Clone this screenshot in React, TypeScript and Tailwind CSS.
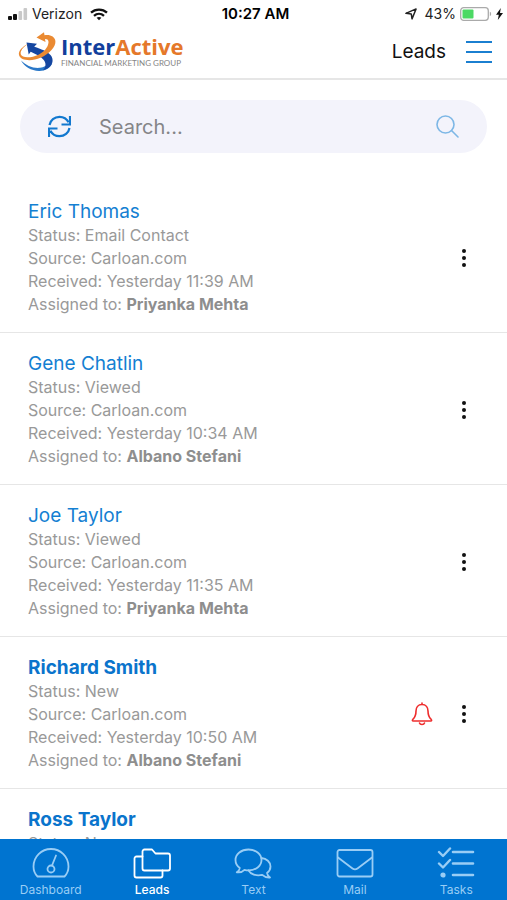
import { useState } from "react";

interface Lead {
  name: string;
  status: string;
  source: string;
  received: string;
  assignedTo: string;
  unread?: boolean;
  alert?: boolean;
}

const leads: Lead[] = [
  { name: "Eric Thomas", status: "Email Contact", source: "Carloan.com", received: "Yesterday 11:39 AM", assignedTo: "Priyanka Mehta" },
  { name: "Gene Chatlin", status: "Viewed", source: "Carloan.com", received: "Yesterday 10:34 AM", assignedTo: "Albano Stefani" },
  { name: "Joe Taylor", status: "Viewed", source: "Carloan.com", received: "Yesterday 11:35 AM", assignedTo: "Priyanka Mehta" },
  { name: "Richard Smith", status: "New", source: "Carloan.com", received: "Yesterday 10:50 AM", assignedTo: "Albano Stefani", unread: true, alert: true },
  { name: "Ross Taylor", status: "New", source: "Carloan.com", received: "Yesterday 10:42 AM", assignedTo: "Priyanka Mehta", unread: true },
];

function StatusBar() {
  return (
    <div className="grid grid-cols-3 items-center h-7 pl-2 pr-1 text-sm text-[#222]">
      <div className="flex items-center gap-1">
        <svg width="20" height="12" viewBox="0 0 20 12">
          <rect x="0" y="8" width="4" height="4" rx="1" fill="#111" />
          <rect x="5" y="6" width="4" height="6" rx="1" fill="#111" />
          <rect x="10.5" y="3" width="3.6" height="9" rx="1" fill="#c9c9c9" />
          <rect x="15.5" y="0" width="3.6" height="12" rx="1" fill="#c9c9c9" />
        </svg>
        <span>Verizon</span>
        <svg className="ml-1" width="18" height="13" viewBox="0 0 18 13" fill="none" stroke="#111" strokeWidth="2.3">
          <path d="M1 4.6C5.4.5 12.6.5 17 4.6" />
          <path d="M4 7.9c2.9-2.6 7.1-2.6 10 0" />
          <path d="M6.6 9.8c1.4-1.2 3.4-1.2 4.8 0L9 12.3z" fill="#111" stroke="none" />
        </svg>
      </div>
      <div className="text-center text-[15px] font-semibold text-black">10:27 AM</div>
      <div className="flex items-center justify-end gap-1">
        <svg className="mr-1" width="12" height="12" viewBox="0 0 13 13" fill="none" stroke="#222" strokeWidth="1.6" strokeLinejoin="round">
          <path d="M12 1 7.6 11.8 6.8 6.4 1 5.8z" />
        </svg>
        <span>43%</span>
        <svg width="32" height="14" viewBox="0 0 32 14">
          <rect x=".7" y=".7" width="27.6" height="12.6" rx="3" fill="none" stroke="#aaa" strokeWidth="1.3" />
          <rect x="2.5" y="2.5" width="11" height="9" rx="1" fill="#4cd964" />
          <path d="M29.8 4.8c1.8.6 1.8 3.8 0 4.4z" fill="#aaa" />
        </svg>
        <svg width="7" height="12" viewBox="0 0 7 12">
          <path d="M4.8 0 0 6.8h2.8L1.8 12 7 4.9H4z" fill="#111" />
        </svg>
      </div>
    </div>
  );
}

function Logo() {
  return (
    <div className="flex items-center gap-1">
      <svg width="39" height="40" viewBox="0 0 39 40">
        {/* blue swoosh, lighter toward the tail */}
        <path d="M3 28.5C8 33.5 15 36.500 22 35.800c4-.4 6.500-2 8-4.500l4 .5c-2 4.500-7 7.400-13 7.200C13 38.700 6.500 34.500 3 28.500z" fill="#2a78c8" />
        <path d="M8.5 10.500 19 11.800l-2.800 3C23 17 29.500 19.500 32.500 23c3.500 4.200 2.500 9.500-2 12.800-1.600 1.200-3.500 2-5.500 2.500 3-3 3.500-7 .5-10.500-2.500-3-7-5.500-12.800-8l-2 2.700z" fill="#1546a0" />
        {/* thin orange ring that swells into the top arrow */}
        <path
          d="M10 12C4 14.800.200 19 1 23c1.500 6 13 6.500 21.500 2.800C31.500 22 38 14.500 37.400 9 36.800 4.500 32 2.300 26.500 3.300L26 .200 18.500 5.500 27.500 10l-.5-3c2.500 0 3.700 1 3.500 3.500-.5 5-4.500 9.500-10 12.200C13.500 26 4 26.500 2.800 22.300 2 19 5 15 10 12z"
          fill="#ea8a32"
        />
      </svg>
      <div className="flex flex-col">
        <span className="font-['Open_Sans'] text-[22px] leading-[22px] font-bold text-[#123f9c]">
          Inter<span className="text-[#e5782a]">Active</span>
        </span>
        <span className="font-['Lato'] text-[8px] leading-3 text-[#858585] whitespace-nowrap">FINANCIAL MARKETING GROUP</span>
      </div>
    </div>
  );
}

function LeadRow({ lead }: { lead: Lead }) {
  return (
    <li className="flex items-center justify-between pl-7 pr-9 pt-[19px] pb-4 border-b border-[#e6e6e6]">
      <div className="text-base leading-[23px] text-[#999]">
        <h2 className={lead.unread ? "text-[19px] leading-6 font-bold text-[#0a74cc]" : "text-[19px] leading-6 text-[#1480d2]"}>
          {lead.name}
        </h2>
        <p>Status: {lead.status}</p>
        <p>Source: {lead.source}</p>
        <p>Received: {lead.received}</p>
        <p>
          Assigned to: <b className="font-bold text-[#8e8e8e]">{lead.assignedTo}</b>
        </p>
      </div>
      <div className="flex items-center gap-6">
        {lead.alert && (
          <button type="button" aria-label="Alert">
            <svg width="22" height="24" viewBox="0 0 22 24" fill="none" stroke="#ee2d2d" strokeWidth="1.6" strokeLinecap="round" strokeLinejoin="round">
              <path d="M11 1v1.5M11 2.5c-4 0-6 3-6 6.5 0 5-1.2 6.500-3 8.200-1 1-.7 1.800.3 1.800h17.400c1 0 1.300-.8.3-1.800-1.800-1.700-3-3.200-3-8.200 0-3.500-2-6.500-6-6.500z" />
              <path d="M8.5 21c.7 2 4.3 2 5 0" />
            </svg>
          </button>
        )}
        <button type="button" aria-label="More options" className="px-1">
          <svg width="6" height="20" viewBox="0 0 6 20" fill="#111">
            <circle cx="3" cy="3" r="2" />
            <circle cx="3" cy="10" r="2" />
            <circle cx="3" cy="17" r="2" />
          </svg>
        </button>
      </div>
    </li>
  );
}

const tabs = [
  {
    label: "Dashboard",
    icon: (
      <>
        <path d="M5.5 29.500C3 27 1.500 23.500 1.500 19.500a17.500 17.500 0 0 1 35 0c0 4-1.500 7.500-4 10z" />
        <circle cx="19" cy="22" r="3.5" />
        <path d="M20 18.500 24 8.500" />
      </>
    ),
  },
  {
    label: "Leads",
    icon: (
      <>
        <path d="M9.5 9.500H3.500a2 2 0 0 0-2 2v17a2 2 0 0 0 2 2h24a2 2 0 0 0 2-2v-5" />
        <path d="M9.5 4.500a2 2 0 0 1 2-2h7.500l3.500 4h12.500a2 2 0 0 1 2 2v13a2 2 0 0 1-2 2h-23.500a2 2 0 0 1-2-2z" />
      </>
    ),
  },
  {
    label: "Text",
    icon: (
      <>
        <path d="M14.5 2.500C7.300 2.500 1.500 7 1.500 13c0 3.200 1.500 6 4.300 8-.2 1.800-1.300 3.300-3 4.300 3 .4 5.800-.5 7.700-2.500 1.300.4 2.600.6 4 .6 7.200 0 13-4.400 13-10.400S21.700 2.500 14.500 2.500z" />
        <path d="M27.3 11c5.300.6 9.200 4 9.200 8.500 0 2.700-1.300 4.800-3.500 6.400.2 1.800 1.300 3.300 3 4.600-3.200.2-5.900-.8-7.800-2.600-6 1.400-11.700-.700-13.700-4.600" />
      </>
    ),
  },
  {
    label: "Mail",
    icon: (
      <>
        <rect x="1.5" y="3" width="35" height="26.5" rx="2" />
        <path d="m2 10.500 14.500 11c1.600 1.200 3.400 1.200 5 0L36 10.500" />
      </>
    ),
  },
  {
    label: "Tasks",
    icon: (
      <>
        <path d="m2 5 4 4 7-7.500M2 16.500l4 4L13 13" strokeWidth="2.4" />
        <path d="M16 5H36M16 16.500H36M16 28H36" strokeWidth="2.6" />
        <circle cx="6" cy="28" r="1.7" fill="currentColor" />
      </>
    ),
  },
];

export default function App() {
  const [query, setQuery] = useState("");
  const [activeTab, setActiveTab] = useState("Leads");

  const visible = leads.filter((l) => l.name.toLowerCase().includes(query.toLowerCase()));

  return (
    <div className="flex flex-col h-screen overflow-hidden bg-white font-['Inter',sans-serif]">
      <StatusBar />

      <header className="flex items-center justify-between h-[52px] shrink-0 pl-[18px] pr-[15px] pb-0.5 border-b-2 border-[#e6e6e6]">
        <Logo />
        <div className="flex items-center gap-5">
          <h1 className="text-[19px] text-[#111]">Leads</h1>
          <button type="button" aria-label="Menu" className="flex flex-col gap-2">
            <span className="block w-[26px] h-0.5 bg-[#1b7fd0]" />
            <span className="block w-[26px] h-0.5 bg-[#1b7fd0]" />
            <span className="block w-[26px] h-0.5 bg-[#1b7fd0]" />
          </button>
        </div>
      </header>

      <div className="px-5 pt-5 pb-7">
        <div className="flex items-center h-[53px] px-7 rounded-full bg-[#f3f3fb]">
          <button type="button" aria-label="Refresh" className="shrink-0">
            <svg width="23" height="23" viewBox="0 0 23 23" fill="none" stroke="#1278cf" strokeWidth="2.2">
              <path d="M1.5 10C2.300 5.200 6.500 1.800 11.500 1.800c4 0 7.300 2 9 5.500M22 1v8.500h-8.500" />
              <path d="M21.5 13c-.8 4.800-5 8.200-10 8.200-4 0-7.300-2-9-5.500M1 22v-8.500h8.500" />
            </svg>
          </button>
          <input
            type="text"
            aria-label="Search leads"
            placeholder="Search..."
            value={query}
            onChange={(e) => setQuery(e.target.value)}
            className="flex-1 min-w-0 ml-7 bg-transparent text-xl text-[#444] placeholder:text-[#858588] focus:outline-none"
          />
          <button type="button" aria-label="Search" className="shrink-0">
            <svg width="23" height="23" viewBox="0 0 23 23" fill="none" stroke="#7db7e6" strokeWidth="1.6" strokeLinecap="round">
              <circle cx="9.5" cy="9.5" r="8.5" />
              <path d="m15.500 15.500 6.500 6.500" />
            </svg>
          </button>
        </div>
      </div>

      <ul className="flex-1 min-h-0 overflow-hidden">
        {visible.map((lead) => (
          <LeadRow key={lead.name} lead={lead} />
        ))}
      </ul>

      <nav className="grid grid-cols-5 shrink-0 h-[61px] bg-[#0074d0]">
        {tabs.map((tab) => (
          <button
            key={tab.label}
            type="button"
            onClick={() => setActiveTab(tab.label)}
            className={
              tab.label === activeTab
                ? "flex flex-col items-center pt-2 text-white font-medium"
                : "flex flex-col items-center pt-2 text-[#99cdf5]"
            }
          >
            <svg width="38" height="33" viewBox="0 0 38 33" fill="none" stroke="currentColor" strokeWidth="1.8" strokeLinecap="round" strokeLinejoin="round">
              {tab.icon}
            </svg>
            <span className="text-xs leading-5">{tab.label}</span>
          </button>
        ))}
      </nav>
    </div>
  );
}
